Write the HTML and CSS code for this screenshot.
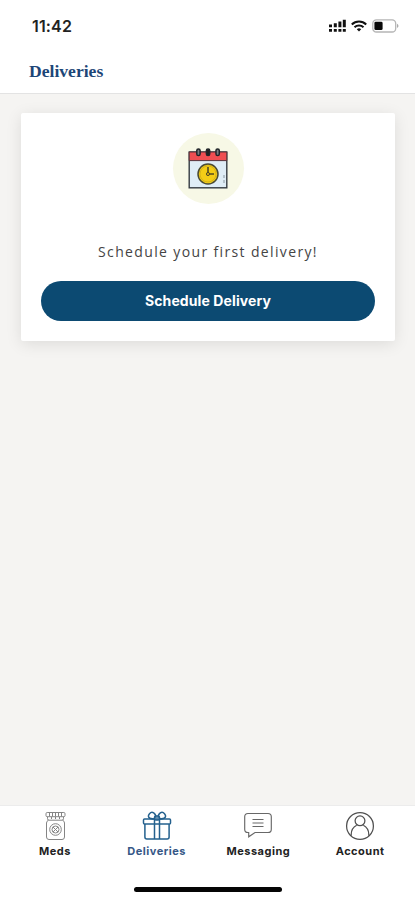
FILE: index.html
```html
<!DOCTYPE html>
<html lang="en">
<head>
<meta charset="utf-8">
<title>Deliveries</title>
<link rel="stylesheet" href="styles.css">
</head>
<body>
<div class="app">
  <header class="header">
    <div class="status">
      <span class="time">11:42</span>
      <div class="indicators">
        <svg width="17" height="14" viewBox="0 0 17 14" fill="#111"><path d="M0 5.500h3v2.700H0zM4.800 4.300h3v3.900h-3zM9.400 2.500h3v5.700h-3zM13.800 0.800h3v7.400h-3z"/><path d="M0 10h3v2.700H0zM4.800 10h3v2.700h-3zM9.400 10h3v2.700h-3zM13.800 10h3v2.700h-3z"/></svg>
        <svg width="16" height="12" viewBox="0 0 16 12" fill="none" stroke="#111" stroke-width="2.1"><path d="M.8 4.400a10.500 10.500 0 0 1 14.400 0M3.500 7.300a6.600 6.600 0 0 1 9 0"/><path d="M5.800 9.200a3.400 3.400 0 0 1 4.400 0L8 11.400z" fill="#111" stroke="none"/></svg>
        <svg width="27" height="14" viewBox="0 0 27 14"><rect x=".8" y=".8" width="22.9" height="12.2" rx="3.6" fill="#fff" stroke="#b5b5b5" stroke-width="1.3"/><rect x="2.4" y="2.7" width="8.2" height="8.4" rx="1.4" fill="#090909"/><path d="M25 4.700q3 2.200 0 4.400z" fill="#aaa"/></svg>
      </div>
    </div>
    <h1 class="title">Deliveries</h1>
  </header>
  <main class="content">
    <section class="card">
      <div class="badge">
        <svg width="40" height="42" viewBox="0 0 40 42">
          <rect x="1.2" y="4" width="37.6" height="35.8" fill="#dfedf6" stroke="#353b42" stroke-width="1.4"/>
          <path d="M1.200 4h37.600v8.600H1.200z" fill="#ef4e52" stroke="#57333b" stroke-width="1"/>
          <g fill="#777e82" stroke="#20252a" stroke-width="1.5"><rect x="8.8" y="1" width="3.3" height="6.6" rx="1.6"/><rect x="18.4" y="1" width="3.3" height="6.6" rx="1.6" fill="#222"/><rect x="28" y="1" width="3.3" height="6.6" rx="1.6"/></g>
          <circle cx="20" cy="26" r="10" fill="#f4cd16" stroke="#4a4b35" stroke-width="1.5"/>
          <circle cx="20" cy="26" r="8" fill="none" stroke="#c8a91b" stroke-width=".7"/>
          <path d="M20 19v7h6" fill="none" stroke="#514b22" stroke-width="1.6"/><circle cx="20" cy="26" r="1.6" fill="#d6ad12" stroke="#514b22"/>
          <path d="M36 27v3m0 2v3" stroke="#71808b" stroke-width=".8"/>
        </svg>
      </div>
      <p class="message">Schedule your first delivery!</p>
      <button class="schedule">Schedule Delivery</button>
    </section>
  </main>
  <nav class="tabs">
    <a class="tab">
      <svg width="30" height="30" viewBox="0 0 30 30" fill="none" stroke="#858585" stroke-width="1"><rect x="6" y="1.5" width="19" height="4.2" rx="1.2"/><path d="M7.500 5.700v2q0 1.500 1.500 1.500h13q1.500 0 1.500-1.500v-2M9.500 2v3.500M12.500 2v3.500M15.500 2v3.500M18.500 2v3.500M21.500 2v3.500M11.500 6v2M15.500 6v2M19.500 6v2M8.500 9.200Q6.500 10 6.500 12v14q0 2.500 2.500 2.500h13q2.500 0 2.500-2.500V12q0-2-2-2.800"/><circle cx="15.5" cy="18.5" r="5.8"/><circle cx="15.5" cy="18.5" r="3.5"/><path d="m13 16 5 5m-5 0 5-5"/></svg>
      <span>Meds</span>
    </a>
    <a class="tab active">
      <svg width="30" height="30" viewBox="0 0 30 30" fill="none" stroke="#24618e" stroke-width="1.5"><rect x="1.5" y="8" width="27" height="5" rx="1"/><path d="M2.900 13v13q0 2 2 2h20.200q2 0 2-2V13M12.500 8v20M17.500 8v20M12.500 8C6 8 5.500 5 7.500 2.700 10-.2 14 2 14 7M17.500 8C24 8 24.500 5 22.500 2.700 20-.2 16 2 16 7"/><rect x="12.5" y="5" width="5" height="4" rx="1.3"/></svg>
      <span>Deliveries</span>
    </a>
    <a class="tab">
      <svg width="30" height="30" viewBox="0 0 30 30" fill="none" stroke="#686868" stroke-width="1.15"><path d="M5 2.500h20q3.300 0 3.300 3.300v12.400q0 3.300-3.300 3.300H12l-6.300 4.300v-4.300H5q-3.300 0-3.300-3.300V5.800Q1.700 2.500 5 2.500zM9.500 8.500h11M9.500 12h11M9.500 15.500h11"/></svg>
      <span>Messaging</span>
    </a>
    <a class="tab">
      <svg width="30" height="30" viewBox="0 0 30 30" fill="none" stroke="#505050" stroke-width="1.25"><circle cx="15" cy="15" r="13.4"/><circle cx="15" cy="9.8" r="4.9"/><path d="M6.200 24.800v-1.300c0-4.500 2.200-7.600 5.500-9.300M23.800 24.800v-1.300c0-4.500-2.200-7.600-5.500-9.300"/></svg>
      <span>Account</span>
    </a>
  </nav>
  <div class="home"><div class="home-bar"></div></div>
</div>
</body>
</html>
```
FILE: styles.css
```css
* { box-sizing: border-box; }
body { margin: 0; background: #fff; }
.app { width: 415px; height: 900px; display: flex; flex-direction: column; overflow: hidden; background: #f5f4f2; }
.header { height: 94px; background: #fff; border-bottom: 1px solid #e3e3e3; }
.status { height: 51px; padding: 0 16px 0 32px; display: flex; justify-content: space-between; align-items: center; }
.time { font: 600 16px/20px Inter, sans-serif; letter-spacing: 0.15px; color: #222; }
.indicators { display: flex; align-items: center; gap: 5px; }
.title { margin: 10px 0 0 29px; font: 700 17.6px/20px "Liberation Serif", serif; color: #1d4677; }
.content { flex: 1; padding: 19px 20px 0 21px; }
.card { height: 228px; padding: 20px 20px 20px; display: flex; flex-direction: column; align-items: center; background: #fff; border-radius: 2px; box-shadow: 0 3px 16px rgba(0, 0, 0, .1); }
.badge { width: 71px; height: 71px; border-radius: 50%; background: #f7f8e6; display: flex; align-items: center; justify-content: center; }
.message { margin: 38px 0 0; font: 400 14px/20px "Open Sans", sans-serif; letter-spacing: 1.36px; color: #444; white-space: nowrap; }
.schedule { width: 100%; height: 40px; margin-top: 19px; padding: 0; border: 0; border-radius: 20px; background: #0c4a72; color: #fff; font: 700 14px/40px Inter, sans-serif; letter-spacing: 0.1px; }
.tabs { height: 62px; padding: 5px 4px 0; display: flex; background: #fff; border-top: 1px solid #ececec; }
.tab { flex: 1; display: flex; flex-direction: column; align-items: center; font: 700 11px/14px Inter, sans-serif; letter-spacing: .5px; color: #222; }
.tab span { margin-top: 3px; }
.active { color: #365887; }
.home { height: 33px; padding-top: 20px; display: flex; justify-content: center; background: #fff; }
.home-bar { width: 148px; height: 5px; border-radius: 3px; background: #050505; }
```
